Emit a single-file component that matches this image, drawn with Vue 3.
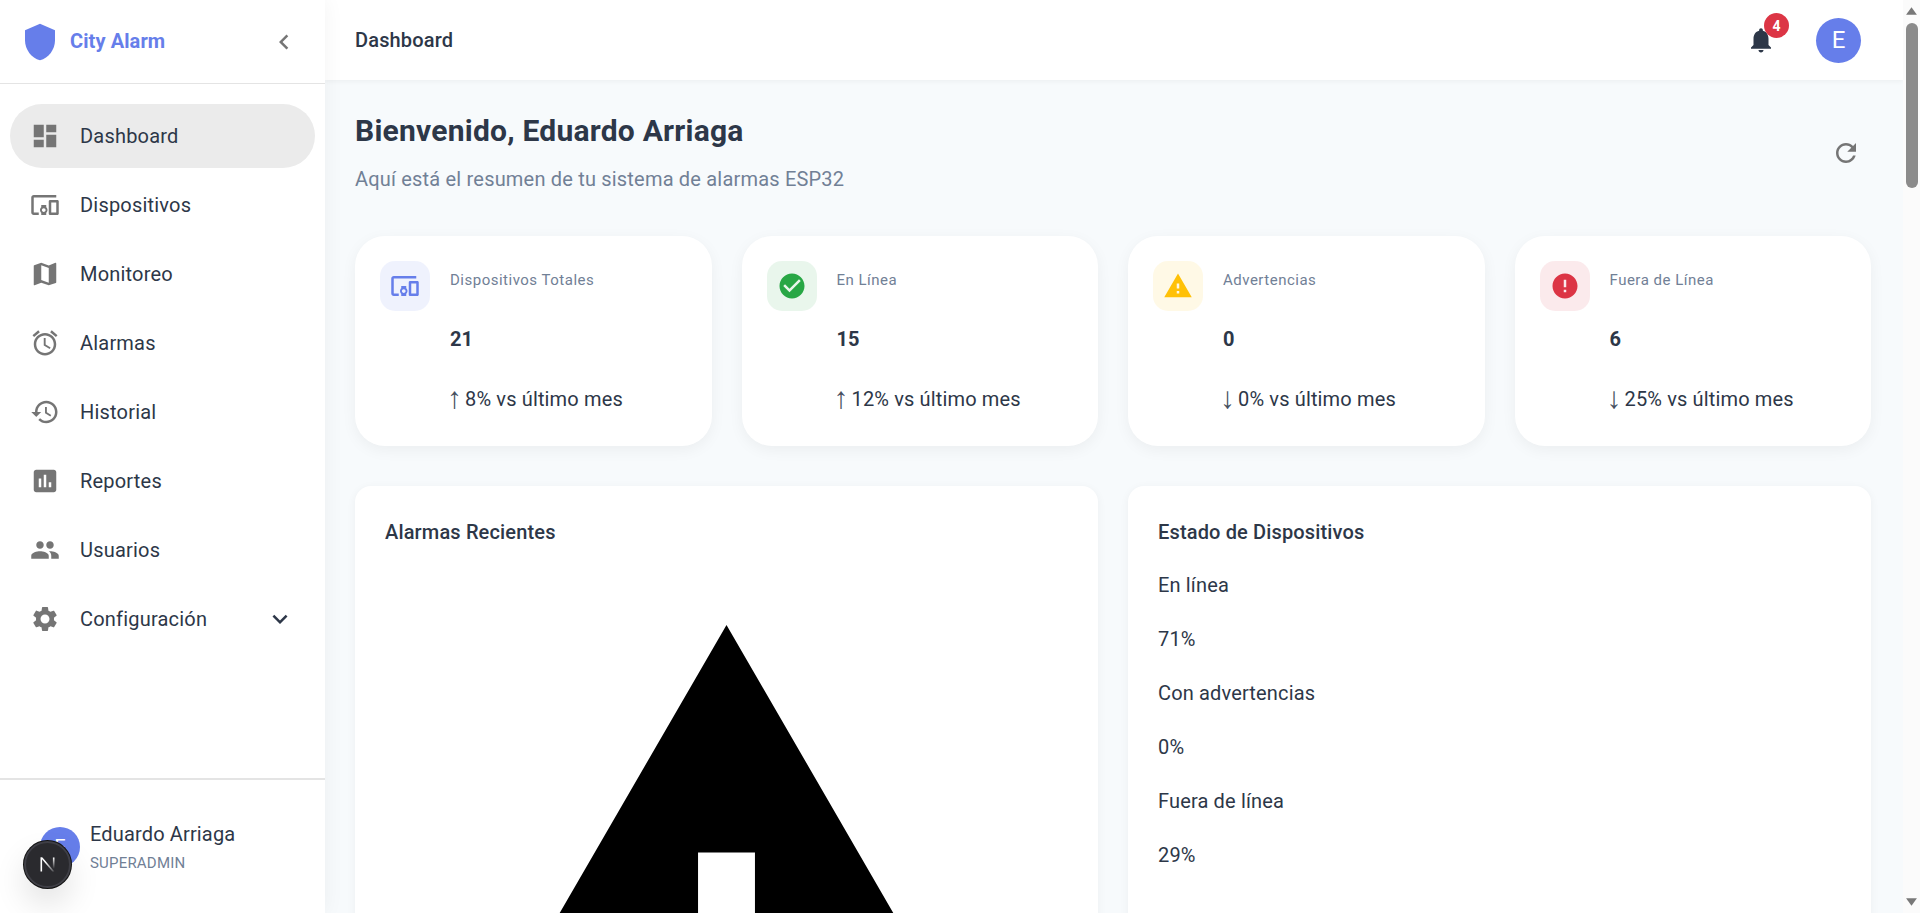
<script setup>
const icons = {
  dashboard: 'M3 13h8V3H3v10zm0 8h8v-6H3v6zm10 0h8V11h-8v10zm0-18v6h8V3h-8z',
  devices: 'M3 6h18V4H3c-1.1 0-2 .9-2 2v12c0 1.1.9 2 2 2h4v-2H3V6zm10 6H9v1.78c-.61.55-1 1.33-1 2.22s.39 1.67 1 2.22V20h4v-1.78c.61-.55 1-1.34 1-2.22s-.39-1.67-1-2.22V12zm-2 5.5c-.83 0-1.5-.67-1.5-1.5s.67-1.5 1.5-1.5 1.5.67 1.5 1.5-.67 1.5-1.5 1.5zM22 8h-6c-.5 0-1 .5-1 1v10c0 .5.5 1 1 1h6c.5 0 1-.5 1-1V9c0-.5-.5-1-1-1zm-1 10h-4v-8h4v8z',
  map: 'M20.5 3l-.16.03L15 5.1 9 3 3.36 4.9c-.21.07-.36.25-.36.48V20.5c0 .28.22.5.5.5l.16-.03L9 18.9l6 2.1 5.64-1.9c.21-.07.36-.25.36-.48V3.5c0-.28-.22-.5-.5-.5zM15 19l-6-2.11V5l6 2.11V19z',
  alarm: 'M22 5.72l-4.6-3.86-1.29 1.53 4.6 3.86L22 5.72zM7.88 3.39L6.6 1.86 2 5.71l1.29 1.53 4.59-3.85zM12.5 8H11v6l4.75 2.85.75-1.23-4-2.37V8zM12 4c-4.97 0-9 4.03-9 9s4.03 9 9 9 9-4.03 9-9-4.03-9-9-9zm0 16c-3.87 0-7-3.13-7-7s3.13-7 7-7 7 3.13 7 7-3.13 7-7 7z',
  history: 'M13 3c-4.97 0-9 4.03-9 9H1l3.89 3.89.07.14L9 12H6c0-3.87 3.13-7 7-7s7 3.13 7 7-3.13 7-7 7c-1.93 0-3.68-.79-4.94-2.06l-1.42 1.42C8.27 19.99 10.51 21 13 21c4.97 0 9-4.03 9-9s-4.03-9-9-9zm-1 5v5l4.28 2.54.72-1.21-3.5-2.08V8H12z',
  reports: 'M19 3H5c-1.1 0-2 .9-2 2v14c0 1.1.9 2 2 2h14c1.1 0 2-.9 2-2V5c0-1.1-.9-2-2-2zM9 17H7v-7h2v7zm4 0h-2V7h2v10zm4 0h-2v-4h2v4z',
  people: 'M16 11c1.66 0 2.99-1.34 2.99-3S17.66 5 16 5c-1.66 0-3 1.34-3 3s1.34 3 3 3zm-8 0c1.66 0 2.99-1.34 2.99-3S9.66 5 8 5C6.34 5 5 6.34 5 8s1.34 3 3 3zm0 2c-2.33 0-7 1.17-7 3.5V19h14v-2.5c0-2.33-4.67-3.5-7-3.5zm8 0c-.29 0-.62.02-.97.05 1.16.84 1.97 1.97 1.97 3.45V19h6v-2.5c0-2.33-4.67-3.5-7-3.5z',
  settings: 'M19.14 12.94c.04-.3.06-.61.06-.94 0-.32-.02-.64-.07-.94l2.03-1.58c.18-.14.23-.41.12-.61l-1.92-3.32c-.12-.22-.37-.29-.59-.22l-2.39.96c-.5-.38-1.03-.7-1.62-.94l-.36-2.54c-.04-.24-.24-.41-.48-.41h-3.84c-.24 0-.43.17-.47.41l-.36 2.54c-.59.24-1.13.57-1.62.94l-2.39-.96c-.22-.08-.47 0-.59.22L2.74 8.87c-.12.21-.08.47.12.61l2.03 1.58c-.05.3-.09.63-.09.94s.02.64.07.94l-2.03 1.58c-.18.14-.23.41-.12.61l1.92 3.32c.12.22.37.29.59.22l2.39-.96c.5.38 1.03.7 1.62.94l.36 2.54c.05.24.24.41.48.41h3.84c.24 0 .44-.17.47-.41l.36-2.54c.59-.24 1.13-.56 1.62-.94l2.39.96c.22.08.47 0 .59-.22l1.92-3.32c.12-.22.07-.47-.12-.61l-2.01-1.58zM12 15.6c-1.98 0-3.6-1.62-3.6-3.6s1.62-3.6 3.6-3.6 3.6 1.62 3.6 3.6-1.62 3.6-3.6 3.6z',
  check: 'M12 2C6.48 2 2 6.48 2 12s4.48 10 10 10 10-4.48 10-10S17.52 2 12 2zm-2 15-5-5 1.41-1.41L10 14.17l7.59-7.59L19 8l-9 9z',
  warning: 'M1 21h22L12 2 1 21zm12-3h-2v-2h2v2zm0-4h-2v-4h2v4z',
  error: 'M12 2C6.48 2 2 6.48 2 12s4.48 10 10 10 10-4.48 10-10S17.52 2 12 2zm1 15h-2v-2h2v2zm0-4h-2V7h2v6z',
  shield: 'M12 1 3 5v6c0 5.55 3.84 10.74 9 12 5.16-1.26 9-6.45 9-12V5l-9-4z',
  back: 'M15.41 7.41 14 6l-6 6 6 6 1.41-1.41L10.83 12z',
  more: 'M16.59 8.59 12 13.17 7.41 8.59 6 10l6 6 6-6z',
  bell: 'M12 22c1.1 0 2-.9 2-2h-4c0 1.1.89 2 2 2zm6-6v-5c0-3.07-1.64-5.64-4.5-6.32V4c0-.83-.67-1.5-1.5-1.5s-1.5.67-1.5 1.5v.68C7.63 5.36 6 7.92 6 11v5l-2 2v1h16v-1l-2-2z',
  refresh: 'M17.65 6.35C16.2 4.9 14.21 4 12 4c-4.42 0-7.99 3.58-7.99 8s3.57 8 7.99 8c3.73 0 6.84-2.55 7.73-6h-2.08c-.82 2.33-3.04 4-5.65 4-3.31 0-6-2.69-6-6s2.69-6 6-6c1.66 0 3.14.69 4.22 1.78L13 11h7V4l-2.35 2.35z'
}

const nav = [
  { label: 'Dashboard', icon: 'dashboard', active: true },
  { label: 'Dispositivos', icon: 'devices' },
  { label: 'Monitoreo', icon: 'map' },
  { label: 'Alarmas', icon: 'alarm' },
  { label: 'Historial', icon: 'history' },
  { label: 'Reportes', icon: 'reports' },
  { label: 'Usuarios', icon: 'people' },
  { label: 'Configuración', icon: 'settings', expand: true }
]

const stats = [
  { label: 'Dispositivos Totales', value: 21, trend: '↑', text: '8% vs último mes', icon: 'devices', tone: 'blue' },
  { label: 'En Línea', value: 15, trend: '↑', text: '12% vs último mes', icon: 'check', tone: 'green' },
  { label: 'Advertencias', value: 0, trend: '↓', text: '0% vs último mes', icon: 'warning', tone: 'yellow' },
  { label: 'Fuera de Línea', value: 6, trend: '↓', text: '25% vs último mes', icon: 'error', tone: 'red' }
]

// the alarm rows have no styled icon size, so the svg fills the card
const alarms = [1, 2, 3, 4, 5, 6]

const status = [
  { label: 'En línea', value: '71%' },
  { label: 'Con advertencias', value: '0%' },
  { label: 'Fuera de línea', value: '29%' }
]
</script>

<template>
  <div class="layout">
    <aside class="sidebar">
      <div class="brand">
        <svg class="brand-logo" viewBox="0 0 24 24"><path :d="icons.shield" /></svg>
        <span class="brand-name">City Alarm</span>
        <svg class="collapse" viewBox="0 0 24 24"><path :d="icons.back" /></svg>
      </div>
      <nav class="nav">
        <a v-for="item in nav" :key="item.label" class="nav-item" :class="{ active: item.active }">
          <svg class="nav-icon" viewBox="0 0 24 24"><path :d="icons[item.icon]" /></svg>
          <span class="nav-label">{{ item.label }}</span>
          <svg v-if="item.expand" class="expand" viewBox="0 0 24 24"><path :d="icons.more" /></svg>
        </a>
      </nav>
      <div class="user">
        <div class="user-avatar">E</div>
        <div>
          <div class="user-name">Eduardo Arriaga</div>
          <div class="user-role">SUPERADMIN</div>
        </div>
      </div>
    </aside>

    <div class="main">
      <header class="topbar">
        <span class="topbar-title">Dashboard</span>
        <div class="topbar-actions">
          <div class="bell">
            <svg viewBox="0 0 24 24"><path :d="icons.bell" /></svg>
            <span class="badge">4</span>
          </div>
          <div class="avatar">E</div>
        </div>
      </header>

      <main class="content">
        <div class="welcome">
          <div>
            <h1>Bienvenido, Eduardo Arriaga</h1>
            <p>Aquí está el resumen de tu sistema de alarmas ESP32</p>
          </div>
          <button class="refresh">
            <svg viewBox="0 0 24 24"><path :d="icons.refresh" /></svg>
          </button>
        </div>

        <section class="stats">
          <article v-for="stat in stats" :key="stat.label" class="stat">
            <div class="stat-icon" :class="stat.tone">
              <svg viewBox="0 0 24 24"><path :d="icons[stat.icon]" /></svg>
            </div>
            <div>
              <div class="stat-label">{{ stat.label }}</div>
              <div class="stat-value">{{ stat.value }}</div>
              <div class="stat-trend"><span class="arrow">{{ stat.trend }}</span>{{ stat.text }}</div>
            </div>
          </article>
        </section>

        <section class="panels">
          <article class="panel">
            <h2>Alarmas Recientes</h2>
            <div class="alarm-list">
              <svg v-for="n in alarms" :key="n" class="alarm-icon" viewBox="0 0 24 24"><path :d="icons.warning" /></svg>
            </div>
          </article>
          <article class="panel">
            <h2>Estado de Dispositivos</h2>
            <div class="status-list">
              <template v-for="row in status" :key="row.label">
                <div>{{ row.label }}</div>
                <div>{{ row.value }}</div>
              </template>
            </div>
          </article>
        </section>
      </main>
    </div>

    <!-- headless chrome hides real scrollbars, so this one is drawn -->
    <div class="scrollbar">
      <svg class="scroll-up" viewBox="0 0 12 9"><path d="M6 1 11 8H1z" /></svg>
      <div class="scroll-thumb"></div>
      <svg class="scroll-down" viewBox="0 0 12 9"><path d="M1 1h10L6 8z" /></svg>
    </div>

    <button class="dev-badge">
      <svg viewBox="0 0 15 15">
        <defs>
          <linearGradient id="n-diag" x1="0" y1="0" x2="1" y2="1">
            <stop offset="0.35" stop-color="#fff" />
            <stop offset="1" stop-color="#fff" stop-opacity="0.15" />
          </linearGradient>
          <linearGradient id="n-bar" x1="0" y1="0" x2="0" y2="1">
            <stop offset="0" stop-color="#fff" />
            <stop offset="0.8" stop-color="#fff" stop-opacity="0" />
          </linearGradient>
        </defs>
        <rect x="0.5" y="0.5" width="1.6" height="14" fill="#fff" />
        <path d="M0.5 0.5h2L14.4 14.5h-2z" fill="url(#n-diag)" />
        <rect x="12.9" y="0.5" width="1.6" height="14" fill="url(#n-bar)" />
      </svg>
    </button>
  </div>
</template>

<style>
body {
  background: #f7fafc;
}
</style>

<style scoped>
.layout {
  display: flex;
  align-items: flex-start;
  font-family: Roboto, "Liberation Sans", sans-serif;
  color: #2d3748;
}

/* sidebar */
.sidebar {
  position: sticky;
  top: 0;
  flex: 0 0 325px;
  height: 100vh;
  display: flex;
  flex-direction: column;
  background: #fff;
  box-shadow: 0 0 20px rgba(0, 0, 0, 0.05);
  z-index: 2;
}
.brand {
  height: 83px;
  flex-shrink: 0;
  display: flex;
  align-items: center;
  padding: 0 20px;
  border-bottom: 1px solid #e4e4e4;
}
.brand-logo {
  width: 40px;
  height: 40px;
  fill: #667eea;
}
.brand-name {
  margin-left: 10px;
  margin-bottom: 2px;
  font-size: 20px;
  font-weight: 700;
  letter-spacing: 0.1px;
  color: #667eea;
}
.collapse {
  margin-left: auto;
  margin-right: 6px;
  width: 30px;
  height: 30px;
  fill: #757575;
}
.nav {
  padding: 20px 10px;
  display: flex;
  flex-direction: column;
  gap: 5px;
}
.nav-item {
  height: 64px;
  display: flex;
  align-items: center;
  gap: 20px;
  padding: 0 20px;
  border-radius: 32px;
  font-size: 20px;
  letter-spacing: 0.2px;
}
.nav-item.active {
  background: #ebebeb;
}
.nav-icon {
  width: 30px;
  height: 30px;
  fill: #757575;
}
.expand {
  margin-left: auto;
  width: 30px;
  height: 30px;
  fill: #2d3748;
}
.user {
  margin-top: auto;
  height: 135px;
  box-sizing: border-box;
  display: flex;
  align-items: center;
  gap: 10px;
  padding: 0 40px;
  border-top: 2px solid #e4e4e4;
}
.user-avatar {
  width: 40px;
  height: 40px;
  border-radius: 50%;
  background: #667eea;
  color: #fff;
  font-size: 20px;
  display: flex;
  align-items: center;
  justify-content: center;
}
.user-name {
  font-size: 20px;
  line-height: 26px;
  letter-spacing: 0.15px;
}
.user-role {
  margin-top: 6px;
  font-size: 15px;
  line-height: 20px;
  letter-spacing: 0.2px;
  color: #718096;
}

/* top bar */
.main {
  flex: 1;
  min-width: 0;
}
.topbar {
  position: sticky;
  top: 0;
  height: 80px;
  display: flex;
  align-items: center;
  justify-content: space-between;
  padding: 0 30px;
  background: #fff;
  box-shadow: 0 2px 4px rgba(0, 0, 0, 0.04);
  z-index: 1;
}
.topbar-title {
  font-size: 20px;
  font-weight: 500;
  letter-spacing: 0.15px;
}
.topbar-actions {
  display: flex;
  align-items: center;
  gap: 40px;
  margin-right: 12px;
}
.bell {
  position: relative;
  width: 30px;
  height: 30px;
}
.bell svg {
  width: 30px;
  height: 30px;
  fill: #2d3748;
}
.badge {
  position: absolute;
  top: -12px;
  right: -13px;
  width: 25px;
  height: 25px;
  border-radius: 50%;
  background: #dc3545;
  color: #fff;
  font-size: 14px;
  font-weight: 700;
  display: flex;
  align-items: center;
  justify-content: center;
}
.avatar {
  width: 45px;
  height: 45px;
  border-radius: 50%;
  background: #667eea;
  color: #fff;
  font-size: 24px;
  display: flex;
  align-items: center;
  justify-content: center;
}

/* page */
.content {
  padding: 30px 32px 30px 30px;
}
.welcome {
  display: flex;
  align-items: center;
  justify-content: space-between;
  margin-bottom: 41px;
}
.welcome h1 {
  margin: 0 0 11px;
  font-size: 30px;
  line-height: 42px;
  font-weight: 700;
  letter-spacing: 0.23px;
}
.welcome p {
  margin: 0;
  font-size: 20px;
  line-height: 32px;
  letter-spacing: 0.19px;
  color: #718096;
}
.refresh {
  padding: 10px;
  border: none;
  background: none;
  display: flex;
}
.refresh svg {
  width: 30px;
  height: 30px;
  fill: #757575;
}

.stats {
  display: grid;
  grid-template-columns: repeat(4, 1fr);
  gap: 30px;
  margin-bottom: 40px;
}
.stat {
  display: flex;
  gap: 20px;
  padding: 25px 25px 32px;
  background: #fff;
  border-radius: 30px;
  box-shadow: 0 4px 15px rgba(0, 0, 0, 0.05);
}
.stat-icon {
  flex: 0 0 50px;
  height: 50px;
  border-radius: 15px;
  display: flex;
  align-items: center;
  justify-content: center;
}
.stat-icon svg {
  width: 30px;
  height: 30px;
  fill: currentColor;
}
.stat-icon.blue { color: #667eea; background: rgba(102, 126, 234, 0.1); }
.stat-icon.green { color: #28a745; background: rgba(40, 167, 69, 0.1); }
.stat-icon.yellow { color: #ffc107; background: rgba(255, 193, 7, 0.1); }
.stat-icon.red { color: #dc3545; background: rgba(220, 53, 69, 0.1); }
.stat-label {
  font-size: 15px;
  line-height: 38px;
  letter-spacing: 0.5px;
  color: #718096;
}
.stat-value {
  margin-top: 25px;
  font-size: 20px;
  line-height: 30px;
  font-weight: 700;
}
.stat-trend {
  margin-top: 30px;
  font-size: 20px;
  line-height: 30px;
  letter-spacing: 0.15px;
}
/* the arrow glyph is tall and thin in the original, so it gets a bigger size in a fixed slot */
.arrow {
  display: inline-block;
  width: 18px;
  margin-left: -3px;
  font-family: "Liberation Sans", sans-serif;
  font-size: 30px;
  line-height: 0;
  vertical-align: -2px;
  color: #47505f;
}

.panels {
  display: grid;
  grid-template-columns: 1fr 1fr;
  gap: 30px;
}
.panel {
  padding: 30px;
  background: #fff;
  border-radius: 16px;
  box-shadow: 0 2px 10px rgba(0, 0, 0, 0.05);
}
.panel h2 {
  margin: 0 0 20px;
  font-size: 20px;
  line-height: 32px;
  font-weight: 500;
  letter-spacing: 0.15px;
}
.alarm-list {
  display: flex;
  flex-direction: column;
  gap: 26px;
}
.alarm-icon {
  display: block;
  width: 100%;
  fill: #000;
}
.status-list {
  margin-top: 25px;
  display: flex;
  flex-direction: column;
  gap: 30px;
  font-size: 20px;
  line-height: 24px;
  letter-spacing: 0.15px;
}

/* scrollbar */
.scrollbar {
  position: sticky;
  top: 0;
  flex: 0 0 17px;
  height: 100vh;
  display: flex;
  flex-direction: column;
  align-items: center;
  background: #fbfbfb;
  z-index: 3;
}
.scrollbar svg {
  width: 13px;
  height: 10px;
  fill: #787878;
}
.scroll-up {
  margin-top: 6px;
}
.scroll-thumb {
  margin-top: 7px;
  width: 12px;
  height: 165px;
  border-radius: 6px;
  background: #8b8b8b;
}
.scroll-down {
  margin-top: auto;
  margin-bottom: 6px;
}

/* next dev indicator, floats over the sidebar */
.dev-badge {
  position: fixed;
  left: 24px;
  top: 841px;
  width: 47px;
  height: 47px;
  border: 2px solid #3f3f46;
  border-radius: 50%;
  background: #2a2a2e;
  padding: 0;
  display: flex;
  align-items: center;
  justify-content: center;
  box-shadow: 0 0 0 1px #111, 0 16px 32px rgba(0, 0, 0, 0.12);
  z-index: 5;
}
.dev-badge svg {
  width: 15px;
  height: 15px;
}
</style>
